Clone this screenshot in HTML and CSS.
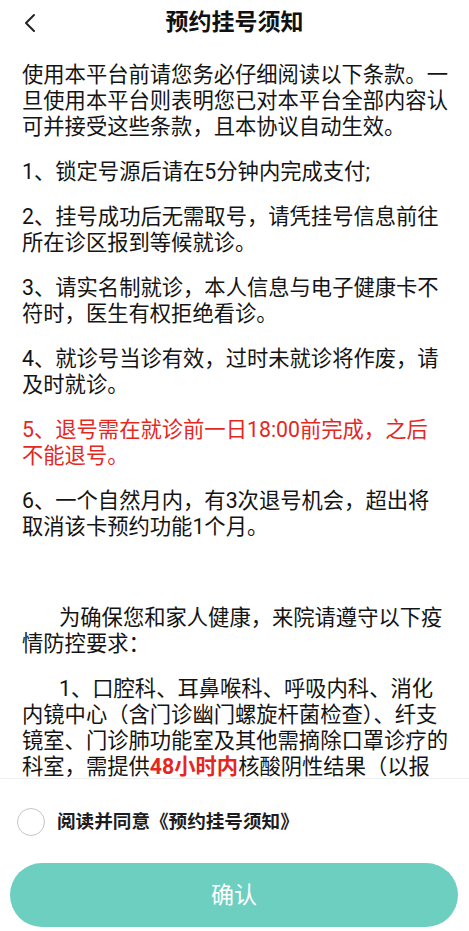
FILE: index.html
```html
<!DOCTYPE html>
<html lang="zh-CN">
<head>
<meta charset="utf-8">
<meta name="viewport" content="width=device-width, initial-scale=1">
<title>预约挂号须知</title>
<link rel="stylesheet" href="styles.css">
</head>
<body>
<div class="page">
  <header class="nav">
    <button class="back" aria-label="返回">
      <svg width="12" height="20" viewBox="0 0 12 20"><path d="M10 2 L2 10 L10 18" fill="none" stroke="#222" stroke-width="2" stroke-linecap="round" stroke-linejoin="round"/></svg>
    </button>
    <h1 class="title">预约挂号须知</h1>
    <span class="nav-spacer"></span>
  </header>
  <main class="content">
    <p>使用本平台前请您务必仔细阅读以下条款。一旦使用本平台则表明您已对本平台全部内容认可并接受这些条款，且本协议自动生效。</p>
    <p>1、锁定号源后请在5分钟内完成支付;</p>
    <p>2、挂号成功后无需取号，请凭挂号信息前往所在诊区报到等候就诊。</p>
    <p>3、请实名制就诊，本人信息与电子健康卡不符时，医生有权拒绝看诊。</p>
    <p>4、就诊号当诊有效，过时未就诊将作废，请及时就诊。</p>
    <p class="warn">5、退号需在就诊前一日18:00前完成，之后不能退号。</p>
    <p>6、一个自然月内，有3次退号机会，超出将取消该卡预约功能1个月。</p>
    <p class="indent section">为确保您和家人健康，来院请遵守以下疫情防控要求：</p>
    <p class="indent">1、口腔科、耳鼻喉科、呼吸内科、消化内镜中心（含门诊幽门螺旋杆菌检查）、纤支镜室、门诊肺功能室及其他需摘除口罩诊疗的科室，需提供<strong class="hl">48小时内</strong>核酸阴性结果（以报告时间为准），方可就诊。</p>
    <p class="indent">2、所有患者及陪同人员进入医院须佩戴口罩，配合测温并出示健康码。</p>
  </main>
  <footer class="footer">
    <label class="agree">
      <span class="radio"></span>
      <span class="agree-text">阅读并同意《预约挂号须知》</span>
    </label>
    <button class="confirm">确认</button>
  </footer>
</div>
</body>
</html>
```

FILE: styles.css
```css
* {
  box-sizing: border-box;
}

html, body {
  margin: 0;
  padding: 0;
  background: #ffffff;
}

body {
  font-family: Roboto, "Noto Sans CJK SC", sans-serif;
  color: #141414;
}

.page {
  height: 100vh;
  display: flex;
  flex-direction: column;
  overflow: hidden;
}

.nav {
  height: 45px;
  flex: none;
  display: grid;
  grid-template-columns: 1fr auto 1fr;
  align-items: center;
}

.back {
  justify-self: start;
  margin-left: 23px;
  padding: 0;
  border: 0;
  background: none;
  width: 14px;
  height: 22px;
  display: flex;
  align-items: center;
  justify-content: center;
}

.title {
  margin: 0;
  font-size: 23px;
  font-weight: 700;
  color: #111;
  line-height: 1;
}

.content {
  flex: 1;
  overflow: hidden;
  padding: 17px 20.5px 0 22px;
}

.content p {
  margin: 0 0 19px;
  font-size: 21.3px;
  line-height: 26px;
  color: #141414;
}

.content p.warn {
  color: #e3281f;
}

.content p.indent {
  text-indent: 37px;
}

.content p.section {
  margin-top: 65px;
}

.hl {
  color: #e3281f;
  font-weight: 700;
  line-height: 26px;
}

.footer {
  flex: none;
  border-top: 1px solid #f0f0f0;
  padding: 29px 11px 4px 10px;
  display: flex;
  flex-direction: column;
}

.agree {
  display: flex;
  align-items: center;
  height: 28px;
  padding-left: 7px;
}

.radio {
  width: 28px;
  height: 28px;
  border-radius: 50%;
  border: 1.5px solid #c4c4d0;
  flex: none;
}

.agree-text {
  margin-left: 12px;
  font-size: 18.6px;
  line-height: 28px;
  font-weight: 700;
  color: #1c1c22;
}

.confirm {
  margin-top: 27px;
  height: 64px;
  border: 0;
  border-radius: 32px;
  background: #6ccfbf;
  color: #ffffff;
  font-family: Roboto, "Noto Sans CJK SC", sans-serif;
  font-size: 23px;
  line-height: 64px;
  font-weight: 400;
}
```
